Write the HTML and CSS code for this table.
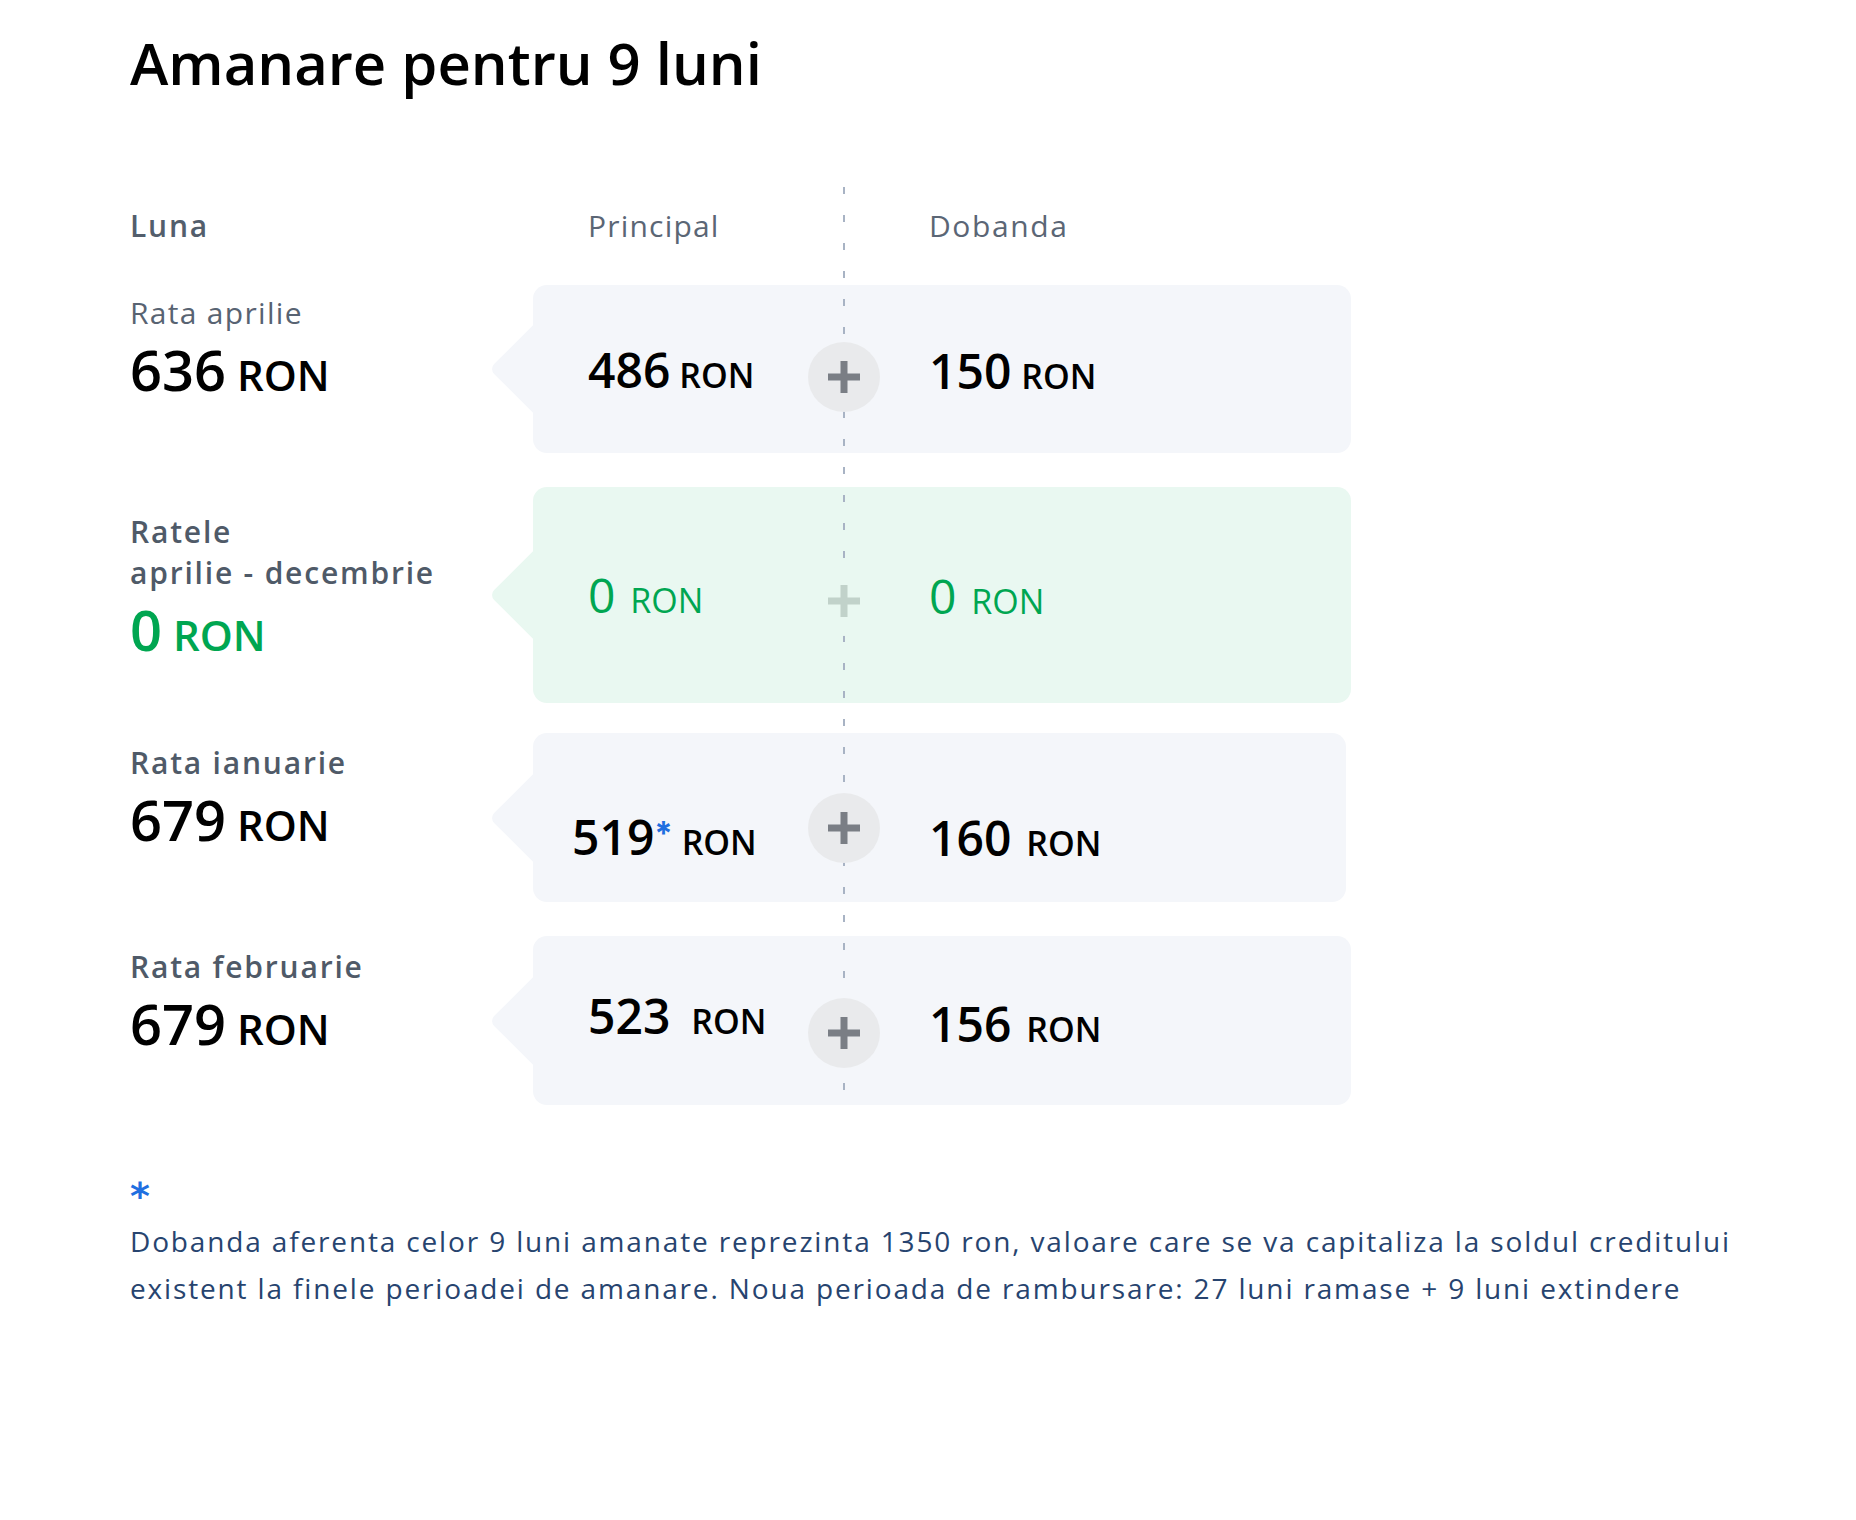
FILE: index.html
```html
<!DOCTYPE html>
<html lang="ro">
<head>
<meta charset="utf-8">
<title>Amanare pentru 9 luni</title>
<link rel="stylesheet" href="styles.css">
</head>
<body>
<div class="page">
  <h1 class="title">Amanare pentru 9 luni</h1>

  <div class="schedule">
    <div class="divider"></div>

    <div class="row row--head">
      <div class="label-col"><span class="head-label">Luna</span></div>
      <div class="card-head">
        <span class="col-head">Principal</span>
        <span></span>
        <span class="col-head col-head--right">Dobanda</span>
      </div>
    </div>

    <div class="row row--1">
      <div class="label-col">
        <div class="month month--light">Rata aprilie</div>
        <div class="total"><span class="total-num">636</span> <span>RON</span></div>
      </div>
      <div class="card">
        <div class="val val--p"><span class="num">486</span> <span class="cur">RON</span></div>
        <div class="plus"><svg class="plus-icon" viewBox="0 0 32 32" width="32" height="32"><rect x="0" y="12.5" width="32" height="7"/><rect x="12.5" y="0" width="7" height="32"/></svg></div>
        <div class="val val--i"><span class="num">150</span> <span class="cur cur--s1">RON</span></div>
      </div>
    </div>

    <div class="row row--2">
      <div class="label-col">
        <div class="month">Ratele<br>aprilie - decembrie</div>
        <div class="total total--green"><span class="total-num">0</span> <span>RON</span></div>
      </div>
      <div class="card card--green">
        <div class="val val--p"><span class="num">0</span> <span class="cur cur--s7">RON</span></div>
        <div class="plus plus--ghost"><svg class="plus-icon" viewBox="0 0 32 32" width="32" height="32"><rect x="0" y="12.5" width="32" height="7"/><rect x="12.5" y="0" width="7" height="32"/></svg></div>
        <div class="val val--i"><span class="num">0</span> <span class="cur cur--s7">RON</span></div>
      </div>
    </div>

    <div class="row row--3">
      <div class="label-col">
        <div class="month">Rata ianuarie</div>
        <div class="total"><span class="total-num">679</span> <span>RON</span></div>
      </div>
      <div class="card">
        <div class="val val--p"><span class="num">519</span><span class="ast">*</span> <span class="cur">RON</span></div>
        <div class="plus"><svg class="plus-icon" viewBox="0 0 32 32" width="32" height="32"><rect x="0" y="12.5" width="32" height="7"/><rect x="12.5" y="0" width="7" height="32"/></svg></div>
        <div class="val val--i"><span class="num">160</span> <span class="cur cur--s7">RON</span></div>
      </div>
    </div>

    <div class="row row--4">
      <div class="label-col">
        <div class="month">Rata februarie</div>
        <div class="total"><span class="total-num">679</span> <span>RON</span></div>
      </div>
      <div class="card">
        <div class="val val--p"><span class="num">523</span> <span class="cur cur--s13">RON</span></div>
        <div class="plus"><svg class="plus-icon" viewBox="0 0 32 32" width="32" height="32"><rect x="0" y="12.5" width="32" height="7"/><rect x="12.5" y="0" width="7" height="32"/></svg></div>
        <div class="val val--i"><span class="num">156</span> <span class="cur cur--s7">RON</span></div>
      </div>
    </div>
  </div>

  <div class="footnote">
    <div class="footnote-mark">*</div>
    <p class="footnote-text">Dobanda aferenta celor 9 luni amanate reprezinta 1350 ron, valoare care se va capitaliza la soldul creditului existent la finele perioadei de amanare. Noua perioada de rambursare: 27 luni ramase + 9 luni extindere</p>
  </div>
</div>
</body>
</html>
```

FILE: styles.css
```css
html, body {
  margin: 0;
  background: #ffffff;
}

body {
  font-family: "Open Sans", "Noto Sans", sans-serif;
  color: #000000;
}

.page {
  padding: 28px 0 0 130px;
}

.title {
  margin: 0;
  font-size: 58px;
  line-height: 70px;
  font-weight: 600;
  color: #000000;
}

/* ---------- schedule ---------- */

.schedule {
  position: relative;
  margin-top: 108px;
  display: flex;
  flex-direction: column;
  gap: 34px;
}

.divider {
  position: absolute;
  left: 713px;
  top: -19px;
  width: 2px;
  height: 903px;
  background: repeating-linear-gradient(to bottom, #a8b3c4 0, #a8b3c4 7px, transparent 7px, transparent 28px);
  z-index: 1;
}

.row {
  display: flex;
  align-items: flex-start;
}

.row--head {
  height: 40px;
  margin-bottom: 5px;
}

.label-col {
  width: 403px;
  flex: none;
}

.head-label {
  font-size: 30px;
  line-height: 40px;
  font-weight: 600;
  letter-spacing: 1.8px;
  color: #535e6c;
}

.card-head {
  width: 818px;
  box-sizing: border-box;
  padding-left: 55px;
  display: grid;
  grid-template-columns: 220px 72px 1fr;
}

.col-head {
  font-size: 30px;
  line-height: 40px;
  font-weight: 400;
  color: #5b6675;
  letter-spacing: 1.2px;
}

.col-head--right {
  padding-left: 49px;
  letter-spacing: 1.6px;
}

.month {
  font-size: 30px;
  line-height: 41px;
  font-weight: 600;
  letter-spacing: 1.8px;
  color: #4f5a68;
}

.month--light {
  font-weight: 400;
  letter-spacing: 1.3px;
  color: #586372;
}

.total {
  margin-top: 4px;
  font-size: 42px;
  line-height: 64px;
  font-weight: 600;
  white-space: nowrap;
  color: #000000;
}

.total-num {
  font-size: 56px;
}

.total--green {
  color: #00a651;
}

/* ---------- cards ---------- */

.card {
  position: relative;
  width: 818px;
  box-sizing: border-box;
  padding-left: 55px;
  border-radius: 14px;
  background: #f4f6fa;
  display: grid;
  grid-template-columns: 220px 72px 1fr;
  align-items: start;
}

.card::before {
  content: "";
  position: absolute;
  left: -31px;
  top: 50%;
  width: 62px;
  height: 62px;
  margin-top: -31px;
  background: inherit;
  transform: rotate(45deg);
  border-radius: 0 0 0 7px;
}

.card--green {
  background: #e9f8f1;
  color: #00a651;
}

.val {
  font-size: 34px;
  line-height: 56px;
  font-weight: 600;
  white-space: nowrap;
}

.val--i {
  padding-left: 49px;
}

.num {
  font-size: 48px;
  font-weight: 600;
}

.card--green .val {
  font-weight: 500;
}

.card--green .num {
  font-weight: 400;
}

.cur--s1 { margin-left: 1px; }
.cur--s7 { margin-left: 6px; }
.cur--s13 { margin-left: 12px; }

.ast {
  font-family: "Inter", sans-serif;
  font-size: 33px;
  line-height: 1;
  font-weight: 700;
  color: #1f6fe0;
  vertical-align: 10px;
}

.plus {
  position: relative;
  z-index: 2;
  width: 72px;
  height: 70px;
  border-radius: 50%;
  background: #e9eaec;
  display: flex;
  align-items: center;
  justify-content: center;
}

.plus-icon {
  display: block;
  fill: #7a7e85;
}

.plus--ghost {
  background: #e9f8f1;
}

.plus--ghost .plus-icon {
  fill: #c1d2ca;
}

/* per-row geometry */
.row--1 .label-col { padding-top: 7px; }
.row--1 .card { height: 168px; }
.row--1 .val--p { margin-top: 57px; }
.row--1 .val--i { margin-top: 58px; }
.row--1 .plus { margin-top: 57px; }

.row--2 .label-col { padding-top: 24px; }
.row--2 .card { height: 216px; }
.row--2 .val--p { margin-top: 80px; }
.row--2 .val--i { margin-top: 81px; }
.row--2 .plus { margin-top: 79px; }

.row--3 { margin-top: -4px; }
.row--3 .label-col { padding-top: 9px; }
.row--3 .card { height: 169px; width: 813px; }
.row--3 .val--p { margin-top: 76px; margin-left: -16px; }
.row--3 .val--i { margin-top: 77px; }
.row--3 .plus { margin-top: 60px; }

.row--4 .label-col { padding-top: 10px; }
.row--4 .card { height: 169px; }
.row--4 .val--p { margin-top: 52px; }
.row--4 .val--i { margin-top: 60px; }
.row--4 .plus { margin-top: 62px; }

/* ---------- footnote ---------- */

.footnote {
  margin-top: 69px;
  max-width: 1660px;
}

.footnote-mark {
  font-family: "DejaVu Sans", sans-serif;
  font-size: 38px;
  line-height: 44px;
  font-weight: 700;
  color: #1f6fe0;
}

.footnote-text {
  margin: 0;
  font-size: 28px;
  line-height: 47px;
  letter-spacing: 1.85px;
  color: #27446f;
}
```
